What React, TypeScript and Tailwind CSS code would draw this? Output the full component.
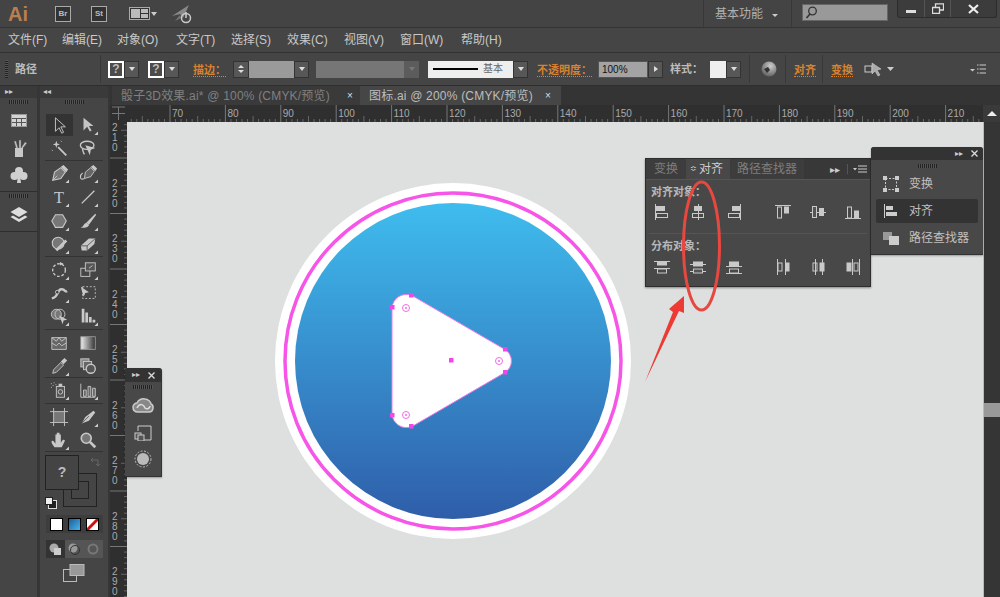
import React from "react";

const S = ({ w = 20, h = 20, vb, children, className = "" }: { w?: number; h?: number; vb?: string; children: React.ReactNode; className?: string }) => (
  <svg width={w} height={h} viewBox={vb ?? `0 0 ${w} ${h}`} className={"block shrink-0 " + className}>{children}</svg>
);

const Btn = () => (
  <div className="w-[15px] h-[17px] bg-[#575757] border border-[#333] flex items-center justify-center">
    <div className="w-0 h-0 border-x-[3.5px] border-x-transparent border-t-[4px] border-t-[#ddd]" />
  </div>
);

const Q = () => (
  <div className="w-[16px] h-[17px] bg-[#4c4c4c] border-2 border-white flex items-center justify-center text-[#bbb] text-[12px] font-bold leading-none">?</div>
);

const Orange = ({ children, cls = "" }: { children: React.ReactNode; cls?: string }) => (
  <span className={"text-[11px] font-bold leading-[14px] text-[#d8812f] border-b border-dotted border-[#d8812f] " + cls}>{children}</span>
);

const Sep = ({ cls = "" }: { cls?: string }) => <div className={"w-px h-[28px] bg-[#383838] " + cls} />;

function Title() {
  return (
    <div className="h-[28px] bg-[#444444] border-b border-[#333] flex items-center shrink-0 relative">
      <span className="ml-[8px] w-[47px] text-[20px] font-bold leading-none text-[#b97f50]">Ai</span>
      <div className="w-[16px] h-[16px] border border-[#aaa] bg-[#333] text-[8px] font-bold leading-[14px] text-center text-[#bbb]">Br</div>
      <div className="ml-[20px] w-[16px] h-[16px] border border-[#aaa] bg-[#333] text-[8px] font-bold leading-[14px] text-center text-[#bbb]">St</div>
      <S w={28} h={16} className="ml-[22px]">
        <rect x="0.5" y="1.5" width="20" height="12" fill="#333" stroke="#aaa" />
        <rect x="2" y="3" width="9" height="9" fill="#bbb" />
        <rect x="12" y="3" width="7" height="4" fill="#bbb" />
        <rect x="12" y="8" width="7" height="4" fill="#bbb" />
        <path d="M22 6h6l-3 4z" fill="#ccc" />
      </S>
      <S w={24} h={20} className="ml-[14px]">
        <path d="M1 12 L18 1 L12 14 L9 10z" fill="#888" />
        <path d="M4 17 L9 11 L10 14z" fill="#777" />
        <circle cx="15" cy="14" r="4.500" fill="none" stroke="#ccc" strokeWidth="1.500" />
        <path d="M15 8v6" stroke="#ccc" strokeWidth="1.500" />
      </S>
      <div className="ml-auto flex items-center h-full">
        <div className="w-px h-full bg-[#383838]" />
        <span className="ml-[11px] text-[12px] text-[#b0b0b0]">基本功能</span>
        <div className="ml-[9px] mt-[3px] w-0 h-0 border-x-[3px] border-x-transparent border-t-[3px] border-t-[#ccc]" />
        <div className="ml-[13px] w-px h-full bg-[#383838]" />
        <div className="ml-[10px] mb-[2px] w-[86px] h-[17px] bg-[#999] border border-[#666] flex items-center pl-[2px]">
          <S w={13} h={13}>
            <circle cx="7.500" cy="5" r="3.800" fill="none" stroke="#333" strokeWidth="1.300" />
            <path d="M5 8 L1.500 12" stroke="#333" strokeWidth="1.600" />
          </S>
        </div>
        <div className="ml-[9px] mr-[3px] mb-[9px] w-[100px] h-[18px] rounded-b-[3px] bg-[#3c3c3c] border border-[#2c2c2c] border-t-0 flex">
          <div className="w-[27px] border-r border-[#555] flex items-center justify-center"><div className="mt-[5px] w-[10px] h-[3px] bg-[#ddd]" /></div>
          <div className="w-[26px] border-r border-[#555] flex items-center justify-center">
            <S w={12} h={11}><path d="M0.500 4.500h7v6h-7zM3.500 4V0.800h8V7H8" fill="none" stroke="#ddd" strokeWidth="1.300" /></S>
          </div>
          <div className="flex-1 flex items-center justify-center">
            <S w={11} h={10}><path d="M1 1 L10 9 M10 1 L1 9" stroke="#eee" strokeWidth="2.200" /></S>
          </div>
        </div>
      </div>
    </div>
  );
}

function MenuBar() {
  const items: [string, string][] = [
    ["文件(F)", "w-[54px]"], ["编辑(E)", "w-[55px]"], ["对象(O)", "w-[59px]"], ["文字(T)", "w-[55px]"],
    ["选择(S)", "w-[56px]"], ["效果(C)", "w-[57px]"], ["视图(V)", "w-[56px]"], ["窗口(W)", "w-[61px]"], ["帮助(H)", "w-[44px]"],
  ];
  return (
    <div className="h-[25px] bg-[#454545] border-b border-[#333] flex items-center pl-[8px] shrink-0">
      {items.map(([t, w]) => (
        <span key={t} className={"text-[12px] text-[#c8c8c8] whitespace-nowrap " + w}>{t}</span>
      ))}
    </div>
  );
}

function Options() {
  return (
    <div className="h-[33px] bg-[#454545] border-b border-[#2e2e2e] flex items-center shrink-0">
      <div className="ml-[5px] w-[3px] h-[18px] bg-[repeating-linear-gradient(0deg,#222_0,#222_1px,#555_1px,#555_2px)]" />
      <span className="ml-[7px] w-[85px] text-[11px] font-bold text-[#bdbdbd]">路径</span>
      <Sep />
      <div className="ml-[7px] flex"><Q /><Btn /></div>
      <div className="ml-[9px] flex"><Q /><Btn /></div>
      <div className="ml-[14px] w-[40px]"><Orange>描边：</Orange></div>
      <div className="w-[16px] h-[17px] bg-[#575757] flex flex-col items-center justify-center gap-[2px] border border-[#333]">
        <div className="w-0 h-0 border-x-[3px] border-x-transparent border-b-[3px] border-b-[#ddd]" />
        <div className="w-0 h-0 border-x-[3px] border-x-transparent border-t-[3px] border-t-[#ddd]" />
      </div>
      <div className="w-[45px] h-[17px] bg-[#9a9a9a]" />
      <Btn />
      <div className="ml-[7px] w-[88px] h-[17px] bg-[#767676]" />
      <div className="w-[15px] h-[17px] bg-[#5c5c5c] flex items-center justify-center"><div className="w-0 h-0 border-x-[3px] border-x-transparent border-t-[4px] border-t-[#777]" /></div>
      <div className="ml-[9px] w-[85px] h-[17px] bg-[#eee] flex items-center pl-[5px]">
        <div className="w-[45px] h-[2.500px] bg-black" />
        <span className="ml-[5px] text-[10px] leading-none text-[#666]">基本</span>
      </div>
      <Btn />
      <div className="ml-[9px] w-[61px]"><Orange>不透明度：</Orange></div>
      <div className="w-[50px] h-[17px] bg-[#a3a3a3] text-[10px] text-[#111] leading-[16px] pl-[3px] border border-[#555]">100%</div>
      <div className="w-[15px] h-[17px] bg-[#575757] border border-[#333] flex items-center justify-center"><div className="w-0 h-0 border-y-[3.500px] border-y-transparent border-l-[4px] border-l-[#ddd]" /></div>
      <span className="ml-[7px] w-[40px] text-[11px] font-bold text-[#bdbdbd]">样式：</span>
      <div className="w-[16px] h-[17px] bg-[#eee]" />
      <Btn />
      <Sep cls="ml-[8px]" />
      <S w={16} h={16} className="ml-[11px]">
        <defs><radialGradient id="gl" cx="0.600" cy="0.300" r="0.800"><stop offset="0" stopColor="#ccc" /><stop offset="1" stopColor="#555" /></radialGradient></defs>
        <circle cx="8" cy="8" r="7.500" fill="url(#gl)" />
        <path d="M3 8l4-2 2 3-3 3z" fill="#333" />
      </S>
      <Sep cls="ml-[8px]" />
      <div className="ml-[8px]"><Orange>对齐</Orange></div>
      <Sep cls="ml-[6px]" />
      <div className="ml-[8px]"><Orange>变换</Orange></div>
      <S w={30} h={16} className="ml-[11px]">
        <rect x="1" y="5" width="7" height="6" fill="#444" stroke="#ccc" />
        <path d="M8 2l9 6-4 1 3 5-2 1-3-5-3 3z" fill="#aaa" stroke="#ddd" strokeWidth="0.500" />
        <path d="M23 6h7l-3.500 4z" fill="#ccc" />
      </S>
      <S w={16} h={12} className="ml-[76px]">
        <path d="M0 6h5l-2.500 2.500z" fill="#ccc" />
        <path d="M7 2h9M7 6h9M7 10h9" stroke="#ccc" strokeWidth="1.200" strokeDasharray="1.500 1 20" />
      </S>
    </div>
  );
}

function Tabs() {
  return (
    <div className="h-[19px] bg-[#343434] flex shrink-0 pl-[2px] items-stretch">
      <div className="w-[248px] flex items-center pl-[9px] bg-[#3a3a3a] text-[12px] tracking-[0.2px] text-[#808080] whitespace-nowrap">
        <span className="w-[226px]">骰子3D效果.ai* @ 100% (CMYK/预览)</span>
        <span className="text-[#ddd] text-[10px]">×</span>
      </div>
      <div className="w-[201px] flex items-center pl-[9px] bg-[#464646] text-[12px] tracking-[0.2px] text-[#bdbdbd] whitespace-nowrap">
        <span className="w-[176px]">图标.ai @ 200% (CMYK/预览)</span>
        <span className="text-[#ddd] text-[10px]">×</span>
      </div>
    </div>
  );
}

function TopRuler() {
  const ticks: number[] = [];
  for (let i = -1; i < 15; i++) for (let j = 0; j < 10; j++) ticks.push(60 + i * 55.4 + j * 5.54);
  const labels = Array.from({ length: 15 }, (_, i) => i);
  return (
    <div className="h-[17px] flex shrink-0">
      <div className="flex-1 bg-[#2f2f2f] overflow-hidden">
        <S w={873} h={17}>
          {ticks.map((x, i) => {
            const major = i % 10 === 0;
            const mid = i % 10 === 5;
            return <line key={i} x1={x} x2={x} y1={major ? 0 : mid ? 11 : 14} y2={17} stroke={major ? "#777" : "#666"} />;
          })}
          <path d="M0 0h17v17H0z" fill="#2f2f2f" />
          <path d="M8.500 2v13M2 8.500h13M2 2h13" stroke="#777" fill="none" />
          {labels.map((i) => (
            <text key={i} x={62 + i * 55.4} y={12} fontSize="10" fill="#aaa" fontFamily="Liberation Sans, sans-serif">{70 + i * 10}</text>
          ))}
        </S>
      </div>
      <div className="w-[17px] bg-[#3a3a3a] flex justify-center pt-[6px]">
        <div className="w-0 h-0 border-x-[5px] border-x-transparent border-b-[5px] border-b-[#eee]" />
      </div>
    </div>
  );
}

function LeftRuler() {
  const rows = Array.from({ length: 9 }, (_, i) => i);
  const ticks: number[] = [];
  for (let i = -1; i < 10; i++) for (let j = 0; j < 10; j++) ticks.push(36 + i * 55.5 + j * 5.55);
  return (
    <div className="w-[17px] bg-[#2f2f2f] shrink-0 overflow-hidden">
      <S w={17} h={475}>
        {ticks.map((y, i) => {
          const major = i % 10 === 0;
          const mid = i % 10 === 5;
          return <line key={i} y1={y} y2={y} x1={major ? 0 : mid ? 11 : 14} x2={17} stroke={major ? "#777" : "#666"} />;
        })}
        {rows.map((i) => {
          const v = String(210 + i * 10).split("");
          const base = 9 + i * 55.5;
          return (
            <text key={i} fontSize="10" fill="#aaa" fontFamily="Liberation Sans, sans-serif">
              {v.map((c, k) => (
                <tspan key={k} x={2} y={base + k * 10.200}>{c}</tspan>
              ))}
            </text>
          );
        })}
      </S>
    </div>
  );
}

const c1 = "#c8c8c8";
const Tri = () => <path d="M20 20h-4l4-4z" fill="#ccc" transform="translate(1 1)" />;
const tools: React.ReactNode[][] = [
  [
    <><path d="M6 2v15l4-4 3 6 2-1-3-6h5z" fill="#333" stroke="#ccc" strokeWidth="1" /></>,
    <><path d="M5 2v14l4-4 3 5 2-1-3-5h5z" fill="#c4c4c4" /><Tri /></>,
  ],
  [
    <><path d="M9 9l9 9" stroke={c1} strokeWidth="2" /><path d="M7 2l1 3 3 1-3 1-1 3-1-3-3-1 3-1z" fill={c1} /><path d="M2 12l1 1M12 2l1 1" stroke={c1} /></>,
    <><ellipse cx="9" cy="7" rx="7.500" ry="4.500" fill="none" stroke={c1} strokeWidth="1.500" /><path d="M7 7l11 3-5 2-1 6z" fill={c1} /><path d="M4 11c0 3 1 4 2 6" stroke={c1} fill="none" strokeWidth="1.500" /></>,
  ],
  [
    <><path d="M3 18l2-9 7-5 5 5-5 7z" fill="#777" stroke={c1} strokeWidth="1.200" /><path d="M12 3l3-2 5 5-2 3z" fill={c1} /><path d="M3 18l5-5" stroke={c1} /><Tri /></>,
    <><path d="M6 16l1-7 6-5 4 4-4 6z" fill="#666" stroke={c1} /><path d="M13 3l3-2 4 4-2 3z" fill={c1} /><path d="M6 16c-6 3-5-4-2-6" stroke={c1} fill="none" strokeWidth="1.200" /><Tri /></>,
  ],
  [
    <><text x="10" y="17" textAnchor="middle" fontSize="18" fill={c1} fontFamily="Liberation Serif, serif">T</text><Tri /></>,
    <><path d="M3 17L17 3" stroke={c1} strokeWidth="1.500" /><Tri /></>,
  ],
  [
    <><path d="M6 3h8l4 7-4 7H6l-4-7z" fill="#777" stroke={c1} strokeWidth="1.200" /><Tri /></>,
    <><path d="M8 12L18 2l1 1-8 11z" fill={c1} /><path d="M2 17c3 0 3-4 6-5l3 2c0 3-5 4-9 3z" fill={c1} /><Tri /></>,
  ],
  [
    <><circle cx="9" cy="9" r="6.500" fill="#777" stroke={c1} strokeWidth="1.200" /><path d="M7 17L18 6" stroke={c1} strokeWidth="3" /><Tri /></>,
    <><path d="M2 12l9-8h7l-1 6-8 7H3z" fill={c1} /><path d="M2 12h7l9-8M9 12v5" stroke="#555" fill="none" /><Tri /></>,
  ],
  [
    <><circle cx="10" cy="10" r="7" fill="none" stroke={c1} strokeWidth="1.500" strokeDasharray="3 2" /><path d="M11 1l4 2-4 2z" fill={c1} /><Tri /></>,
    <><rect x="2" y="8" width="10" height="9" fill="none" stroke={c1} /><rect x="7" y="2" width="11" height="9" fill="#555" stroke={c1} /><path d="M11 8l4-3" stroke={c1} /><Tri /></>,
  ],
  [
    <><path d="M2 16c4-1 5-2 6-5s3-6 6-5 3 3 5 2" fill="none" stroke={c1} strokeWidth="2.500" /><circle cx="8" cy="9" r="2" fill="#444" stroke={c1} /><Tri /></>,
    <><rect x="4" y="3" width="14" height="13" fill="none" stroke={c1} strokeDasharray="2 2" /><path d="M2 3l9 6-4 1-2 4z" fill={c1} /></>,
  ],
  [
    <><circle cx="7" cy="8" r="5.500" fill="#777" stroke={c1} /><circle cx="11" cy="8" r="5.500" fill="none" stroke={c1} /><path d="M10 9l9 5-4 1-1 4z" fill={c1} /><Tri /></>,
    <><path d="M3 2h3v15H3zM7 6h3v11H7zM11 11h3v6h-3zM15 14h3v3h-3z" fill={c1} /><Tri /></>,
  ],
  [
    <><path d="M2 4h16v13H2z" fill="#666" stroke={c1} /><path d="M2 4l5 4 3-4 3 4 5-4M2 10l5 3 3-3 3 3 5-3" stroke={c1} fill="none" /></>,
    <>
      <defs><linearGradient id="gr" x1="0" x2="1" y1="0" y2="0"><stop offset="0" stopColor="#eee" /><stop offset="1" stopColor="#333" /></linearGradient></defs>
      <rect x="2" y="3" width="16" height="14" fill="url(#gr)" stroke="#999" />
    </>,
  ],
  [
    <><path d="M3 18l1-4 8-8 3 3-8 8z" fill="#666" stroke={c1} /><path d="M12 5l4-4 3 3-4 4z" fill={c1} /><Tri /></>,
    <><rect x="2" y="2" width="9" height="9" fill="#888" stroke={c1} /><rect x="5" y="5" width="9" height="9" fill="#666" stroke={c1} /><circle cx="13" cy="13" r="5" fill="#555" stroke={c1} strokeWidth="1.500" /></>,
  ],
  [
    <><rect x="7" y="6" width="9" height="12" fill="#555" stroke={c1} /><circle cx="11.500" cy="12" r="2.500" fill="none" stroke={c1} /><rect x="9.500" y="3" width="4" height="3" fill={c1} /><path d="M1 3h1M3 5h1M1 7h1M4 2h1M6 4h1" stroke={c1} /><Tri /></>,
    <><path d="M2 3v15h16" fill="none" stroke={c1} /><path d="M5 10h3v7H5zM10 6h3v11h-3zM15 8h3v9h-3z" fill="#666" stroke={c1} /><Tri /></>,
  ],
  [
    <><rect x="4" y="4" width="12" height="12" fill="#777" /><path d="M4 0v20M16 0v20M0 4h20M0 16h20" stroke={c1} /></>,
    <><path d="M3 17l4-7 9-7 2 2-7 9z" fill={c1} /><path d="M3 17l8-8" stroke="#555" /><Tri /></>,
  ],
  [
    <><path d="M5 18c-3-4-4-6-3-7 2-1 3 2 4 3V4h1.500v5V2H9v7-7h1.500v8-6H12v9l2-3c2-1 3 0 2 2l-3 6z" fill={c1} /><Tri /></>,
    <><circle cx="8" cy="8" r="5.500" fill="#777" stroke={c1} strokeWidth="1.800" /><path d="M12 12l6 6" stroke={c1} strokeWidth="3" /></>,
  ],
];

const rowStyle = ["h-[24px]", "h-[23px]", "h-[24px]", "h-[24px]", "h-[24px]", "h-[23px]", "h-[26px]", "h-[20px]", "h-[26px]", "h-[26px]", "h-[21px]", "h-[25px]", "h-[26px]", "h-[21px]"];
const sepAfter = new Set([1, 5, 8, 10, 11, 13]);

function Dock() {
  return (
    <div className="flex shrink-0 bg-[#363636] h-full">
      <div className="w-[37px] bg-[#454545] flex flex-col">
        <div className="h-[12px] bg-[#3a3a3a] flex items-center pl-[5px]">
          <div className="text-[8px] leading-none text-[#ccc]">▸▸</div>
        </div>
        <div className="h-[94px] border-b border-[#2e2e2e] flex flex-col items-center">
          <div className="mt-[2px] w-[19px] h-[4px] bg-[repeating-linear-gradient(90deg,#222_0,#222_1px,#555_1px,#555_2px)]" />
          <S w={16} h={13} className="mt-[10px]">
            <rect x="0.500" y="0.500" width="15" height="12" fill="#555" stroke="#999" />
            <path d="M1 1h14v3H1zM1 5h4v3H1zM6 5h4v3H6zM11 5h4v3h-4zM1 9h4v3H1zM6 9h4v3H6zM11 9h4v3h-4z" fill="#d4d4d4" />
          </S>
          <S w={18} h={20} className="mt-[12px]">
            <path d="M5 9h8v9H5z" fill={c1} />
            <path d="M6 9L4 2l2 0 2 7M9 9V1h2v8M11 9l4-6 2 1-4 5" fill={c1} stroke="#555" strokeWidth="0.500" />
          </S>
          <S w={18} h={18} className="mt-[7px]">
            <circle cx="9" cy="5" r="4" fill="#d0d0d0" />
            <circle cx="4.500" cy="10" r="4" fill="#d0d0d0" />
            <circle cx="13.500" cy="10" r="4" fill="#d0d0d0" />
            <path d="M8 8h2l1 9H7z" fill="#d0d0d0" />
          </S>
        </div>
        <div className="h-[40px] border-b border-[#2e2e2e] flex flex-col items-center">
          <div className="mt-[2px] w-[19px] h-[4px] bg-[repeating-linear-gradient(90deg,#222_0,#222_1px,#555_1px,#555_2px)]" />
          <S w={18} h={18} className="mt-[9px]">
            <path d="M9 0l8.500 5L9 10 .5 5z" fill="#ddd" />
            <path d="M3 8.500l6 3.500 6-3.500 2.500 1.500L9 15 .5 10z" fill="#ddd" />
          </S>
        </div>
      </div>
      <div className="w-[3px]" />
      <div className="w-[68px] bg-[#454545] flex flex-col items-center">
        <div className="h-[12px] w-full bg-[#3a3a3a] pl-[3px]"><div className="text-[8px] leading-[12px] text-[#ccc]">◂◂</div></div>
        <div className="mt-[2px] w-[19px] h-[4px] bg-[repeating-linear-gradient(90deg,#222_0,#222_1px,#555_1px,#555_2px)]" />
        <div className="mt-[9px] w-full flex flex-col">
          {tools.map((r, i) => (
            <React.Fragment key={i}>
              <div className={"flex items-center justify-center gap-[2px] relative " + rowStyle[i]}>
                {r.map((ic, k) => (
                  <div key={k} className={"w-[27px] h-[22px] shrink-0 flex items-center justify-center " + (i === 0 && k === 0 ? "bg-[#333]" : "")}>
                    <S w={19} h={19} vb="0 0 21 21">{ic}</S>
                  </div>
                ))}
              </div>
              {sepAfter.has(i) && <div className="mx-[5px] h-px bg-[#333]" />}
            </React.Fragment>
          ))}
        </div>
        <div className="relative w-full h-[63px]">
          <div className="absolute left-[23px] top-[21px] w-[34px] h-[34px] border border-[#222]" />
          <div className="absolute left-[31px] top-[29px] w-[18px] h-[18px] border border-[#222]" />
          <div className="absolute left-[5px] top-[3px] w-[34px] h-[35px] bg-[#444] border border-[#222] flex items-center justify-center text-[#bbb] text-[14px] font-bold">?</div>
          <S w={10} h={10} className="absolute left-[50px] top-[5px]"><path d="M1 3h7v6M3 1L1 3l2 2M6 7l2 2 2-2" fill="none" stroke="#666" /></S>
          <S w={12} h={12} className="absolute left-[5px] top-[45px]"><rect x="3.500" y="3.500" width="8" height="8" fill="#222" stroke="#ddd" /><rect x="0.500" y="0.500" width="7" height="7" fill="#eee" stroke="#222" /></S>
        </div>
        <div className="w-[57px] h-[18px] bg-[#3d3d3d] flex items-center justify-center gap-[5px]">
          <div className="w-[13px] h-[13px] bg-white border border-black" />
          <div className="w-[13px] h-[13px] bg-[linear-gradient(135deg,#1b5e98,#4cb4ea)] border border-black" />
          <S w={13} h={13}><rect width="13" height="13" fill="#fff" /><path d="M0 13L13 0" stroke="#d01010" strokeWidth="3" /><rect x="0.500" y="0.500" width="12" height="12" fill="none" stroke="#000" /></S>
        </div>
        <div className="mt-[7px] w-[57px] h-[18px] bg-[#555] flex">
          <div className="w-[19px] bg-[#333] flex items-center justify-center"><S w={12} h={12}><circle cx="5" cy="5" r="4.500" fill="#aaa" /><rect x="5" y="5" width="7" height="7" fill="#ccc" /></S></div>
          <div className="w-[19px] flex items-center justify-center"><S w={12} h={12}><circle cx="5" cy="5" r="4.500" fill="#999" /><circle cx="7" cy="7" r="4.500" fill="none" stroke="#333" /></S></div>
          <div className="w-[19px] flex items-center justify-center"><S w={12} h={12}><circle cx="6" cy="6" r="4.500" fill="none" stroke="#777" strokeWidth="2" /></S></div>
        </div>
        <S w={22} h={18} className="mt-[6px]">
          <rect x="0.500" y="5.500" width="13" height="12" fill="#444" stroke="#bbb" />
          <rect x="7" y="0.500" width="14" height="11" fill="#999" stroke="#bbb" />
        </S>
      </div>
      <div className="w-[2px]" />
    </div>
  );
}

const A = ({ children }: { children: React.ReactNode }) => (
  <S w={22} h={18} vb="0 0 22 18">
    <g stroke="#c9c9c9" fill="none" strokeWidth="1">{children}</g>
  </S>
);

const alignIcons = [
  <A><path d="M4.500 1v16" /><rect x="5.500" y="3.500" width="8" height="4" fill="#c9c9c9" /><rect x="5.500" y="10.500" width="11" height="4" /></A>,
  <A><path d="M11.500 1v16" /><rect x="7.500" y="3.500" width="7" height="4" fill="#c9c9c9" /><rect x="5.500" y="10.500" width="11" height="4" /></A>,
  <A><path d="M17.500 1v16" /><rect x="9.500" y="3.500" width="7" height="4" fill="#c9c9c9" /><rect x="5.500" y="10.500" width="11" height="4" /></A>,
  <A><path d="M3 2.500h16" /><rect x="5.500" y="4" width="4" height="11" /><rect x="12.500" y="4" width="4" height="6" fill="#c9c9c9" /></A>,
  <A><path d="M3 9.500h16" /><rect x="5.500" y="3.500" width="4" height="11" fill="#555" /><rect x="12.500" y="5.500" width="4" height="7" fill="#c9c9c9" /></A>,
  <A><path d="M3 15.500h16" /><rect x="5.500" y="4" width="4" height="11" /><rect x="12.500" y="8" width="4" height="7" fill="#c9c9c9" /></A>,
];
const distIcons = [
  <A><path d="M3 3.500h16M3 10.500h16" /><rect x="6.500" y="4" width="9" height="3" fill="#c9c9c9" /><rect x="6.500" y="11" width="9" height="4" /></A>,
  <A><path d="M3 6.500h16M3 13.500h16" /><rect x="6.500" y="4" width="9" height="4" fill="#c9c9c9" /><rect x="6.500" y="11" width="9" height="4" fill="#555" /></A>,
  <A><path d="M3 8.500h16M3 15.500h16" /><rect x="6.500" y="4" width="9" height="4" fill="#c9c9c9" /><rect x="6.500" y="11" width="9" height="4" /></A>,
  <A><path d="M5.500 1v16M13.500 1v16" /><rect x="6" y="5" width="4" height="8" /><rect x="14" y="5" width="3" height="8" fill="#c9c9c9" /></A>,
  <A><path d="M8.500 1v16M15.500 1v16" /><rect x="6" y="5" width="4" height="8" /><rect x="13" y="5" width="4" height="8" fill="#c9c9c9" /></A>,
  <A><path d="M10.500 1v16M17.500 1v16" /><rect x="5" y="5" width="4" height="8" fill="#c9c9c9" /><rect x="12" y="5" width="4" height="8" /></A>,
];

function IconRow({ icons }: { icons: React.ReactNode[] }) {
  return (
    <div className="flex pl-[5px]">
      {icons.map((ic, i) => (
        <div key={i} className={"w-[22px] flex justify-center " + (i === 1 || i === 2 ? "ml-[14px]" : i === 3 ? "ml-[27px]" : i > 3 ? "ml-[13px]" : "")}>{ic}</div>
      ))}
    </div>
  );
}

function AlignPanel() {
  return (
    <div className="absolute left-[518px] top-[36px] w-[226px] h-[129px] bg-[#484848] border border-[#2e2e2e] shadow-[0_1px_2px_rgba(0,0,0,0.4)]">
      <div className="h-[21px] bg-[#383838] flex items-stretch border-b border-[#555]">
        <div className="w-[40px] bg-[#3d3d3d] flex items-center justify-center text-[12px] text-[#7e7e7e]">变换</div>
        <div className="w-[44px] bg-[#484848] flex items-center pl-[4px] text-[12px] text-[#cfcfcf] whitespace-nowrap"><span className="text-[8px] mr-[2px]">≎</span>对齐</div>
        <div className="w-[74px] bg-[#3d3d3d] flex items-center justify-center text-[12px] text-[#7e7e7e] whitespace-nowrap">路径查找器</div>
        <div className="ml-auto flex items-center pr-[3px]">
          <span className="text-[10px] text-[#ccc] mr-[7px]">▸▸</span>
          <div className="w-px h-[10px] bg-[#555] mr-[5px]" />
          <S w={14} h={8}><path d="M0 3h4L2 5.500z" fill="#ccc" /><path d="M5 1h9M5 4h9M5 7h9" stroke="#ccc" /></S>
        </div>
      </div>
      <div className="pl-[5px] pt-[5px] text-[11px] font-bold leading-[14px] text-[#b8b8b8]">对齐对象：</div>
      <div className="mt-[4px]"><IconRow icons={alignIcons} /></div>
      <div className="mt-[12px] mx-[3px] h-px bg-[#3a3a3a] border-b border-[#555]" />
      <div className="pl-[5px] pt-[5px] text-[11px] font-bold leading-[14px] text-[#b8b8b8]">分布对象：</div>
      <div className="mt-[5px]"><IconRow icons={distIcons} /></div>
    </div>
  );
}

function PanelRow({ icon, label, active = false }: { icon: React.ReactNode; label: string; active?: boolean }) {
  return (
    <div className={"mx-[5px] h-[24px] rounded-[2px] flex items-center pl-[7px] mb-[3px] " + (active ? "bg-[#333]" : "")}>
      {icon}
      <span className="ml-[10px] text-[12px] text-[#c0c0c0] whitespace-nowrap">{label}</span>
    </div>
  );
}

function SidePanel() {
  return (
    <div className="absolute left-[744px] top-[25px] w-[112px] h-[108px] bg-[#484848] border-b border-[#333] rounded-t-[3px] shadow-[0_1px_2px_rgba(0,0,0,0.3)]">
      <div className="h-[13px] bg-[#333] rounded-t-[3px] flex items-center justify-end pr-[5px] gap-[8px]">
        <span className="text-[8px] text-[#ccc] leading-none">▸▸</span>
        <S w={7} h={7}><path d="M0.500 0.500l6 6M6.500 0.500l-6 6" stroke="#ddd" strokeWidth="1.300" /></S>
      </div>
      <div className="mt-[4px] mx-auto w-[19px] h-[4px] bg-[repeating-linear-gradient(90deg,#222_0,#222_1px,#555_1px,#555_2px)]" />
      <div className="mt-[4px]">
        <PanelRow label="变换" icon={<S w={16} h={16}><rect x="2.500" y="2.500" width="11" height="11" fill="none" stroke="#ccc" strokeDasharray="2 1.500" /><path d="M0 0h4v4H0zM12 0h4v4h-4zM0 12h4v4H0zM12 12h4v4h-4z" fill="#ccc" /></S>} />
        <PanelRow active label="对齐" icon={<S w={16} h={16}><path d="M1.500 1v14" stroke="#ccc" /><path d="M3 3h7v4H3z" fill="#ccc" /><path d="M3 9h11v4H3z" fill="#ccc" /></S>} />
        <PanelRow label="路径查找器" icon={<S w={16} h={16}><path d="M0 2h9v8H0z" fill="#999" /><path d="M6 6h10v9H6z" fill="#ccc" /></S>} />
      </div>
    </div>
  );
}

function FloatPanel() {
  return (
    <div className="absolute left-[125px] top-[368px] w-[37px] h-[109px] bg-[#484848] rounded-t-[3px] border-b border-r border-[#333] shadow-[0_1px_2px_rgba(0,0,0,0.3)] flex flex-col items-center">
      <div className="h-[14px] w-full bg-[#333] rounded-t-[3px] flex items-center justify-center gap-[8px]">
        <span className="text-[8px] text-[#ccc] leading-none">▸▸</span>
        <S w={7} h={7}><path d="M0.500 0.500l6 6M6.500 0.500l-6 6" stroke="#ddd" strokeWidth="1.300" /></S>
      </div>
      <div className="mt-[3px] w-[20px] h-[4px] bg-[repeating-linear-gradient(90deg,#222_0,#222_1px,#555_1px,#555_2px)]" />
      <S w={23} h={16} className="mt-[8px]">
        <path d="M6 15C2 15 1 12 1 10s2-4 4-4c1-3 5-5 8-4 3 0 6 3 6 5 3 1 3 8-2 8z" fill="#888" stroke="#ccc" strokeWidth="1.500" />
        <path d="M5 11c3-6 7-3 8 0 2 2 5 0 5-2" fill="none" stroke="#ddd" strokeWidth="1.500" />
      </S>
      <S w={18} h={16} className="mt-[12px]">
        <path d="M4 6V1h13v14H9" fill="none" stroke="#ccc" />
        <rect x="1" y="8" width="6" height="6" fill="#555" stroke="#ccc" />
        <rect x="4" y="10" width="6" height="6" fill="#555" stroke="#ccc" />
      </S>
      <S w={18} h={18} className="mt-[9px]">
        <circle cx="9" cy="9" r="6" fill="#bbb" />
        <circle cx="9" cy="9" r="8" fill="none" stroke="#bbb" strokeDasharray="2 1.500" />
      </S>
    </div>
  );
}

function Artwork() {
  return (
    <svg width="856" height="475" viewBox="127 122 856 475" className="absolute left-0 top-0">
      <defs>
        <linearGradient id="blue" x1="0" x2="0" y1="0" y2="1">
          <stop offset="0" stopColor="#3fbcee" />
          <stop offset="1" stopColor="#2f5ea9" />
        </linearGradient>
      </defs>
      <circle cx="453" cy="361" r="178" fill="#fff" />
      <circle cx="453" cy="361" r="168" fill="none" stroke="#f655e8" strokeWidth="3.500" />
      <circle cx="453" cy="361" r="158" fill="url(#blue)" />
      <path d="M392 308 A14.500 14.500 0 0 1 412 295.500 L505 349.500 A13.500 13.500 0 0 1 505 372.500 L412 426.500 A14.500 14.500 0 0 1 392 414 Z" fill="#fff" stroke="#ee7be8" />
      {[[411, 295], [392, 307], [505, 349], [505, 372], [392, 415], [411, 426], [451, 360]].map(([x, y], i) => (
        <rect key={i} x={x - 2} y={y - 2} width="4.500" height="4.500" fill="#f545e8" />
      ))}
      {[[406, 308], [499, 361], [406, 415]].map(([x, y], i) => (
        <g key={i}>
          <circle cx={x} cy={y} r="3.500" fill="none" stroke="#f06be8" strokeWidth="1" />
          <circle cx={x} cy={y} r="1" fill="#f06be8" />
        </g>
      ))}
    </svg>
  );
}

function Annotation() {
  return (
    <svg width="1000" height="597" viewBox="0 0 1000 597" className="absolute left-0 top-0 pointer-events-none">
      <path d="M645 382 L673 312 L669 309 L684 296 L684 313 L679 311 Z" fill="#ee3a34" />
      <ellipse cx="701.500" cy="246" rx="18" ry="64" fill="none" stroke="#e8483f" strokeWidth="3" />
    </svg>
  );
}

export default function App() {
  return (
    <div className="relative w-[1000px] h-[597px] overflow-hidden flex flex-col bg-[#444] font-['Liberation_Sans','Noto_Sans_CJK_SC',sans-serif]">
      <Title />
      <MenuBar />
      <Options />
      <div className="flex-1 flex min-h-0">
        <Dock />
        <div className="flex-1 flex flex-col min-w-0">
          <Tabs />
          <TopRuler />
          <div className="flex-1 min-h-0 flex">
            <LeftRuler />
            <div className="flex-1 relative bg-[#dde0df] border-r border-[#bbb]">
              <Artwork />
            </div>
            <div className="w-[16px] bg-[#353535] relative">
              <div className="absolute left-0 top-[281px] w-[16px] h-[14px] bg-[#999]" />
            </div>
          </div>
        </div>
      </div>
      <FloatPanel />
      <div className="absolute left-[127px] top-[122px]">
        <AlignPanel />
        <SidePanel />
      </div>
      <Annotation />
    </div>
  );
}
